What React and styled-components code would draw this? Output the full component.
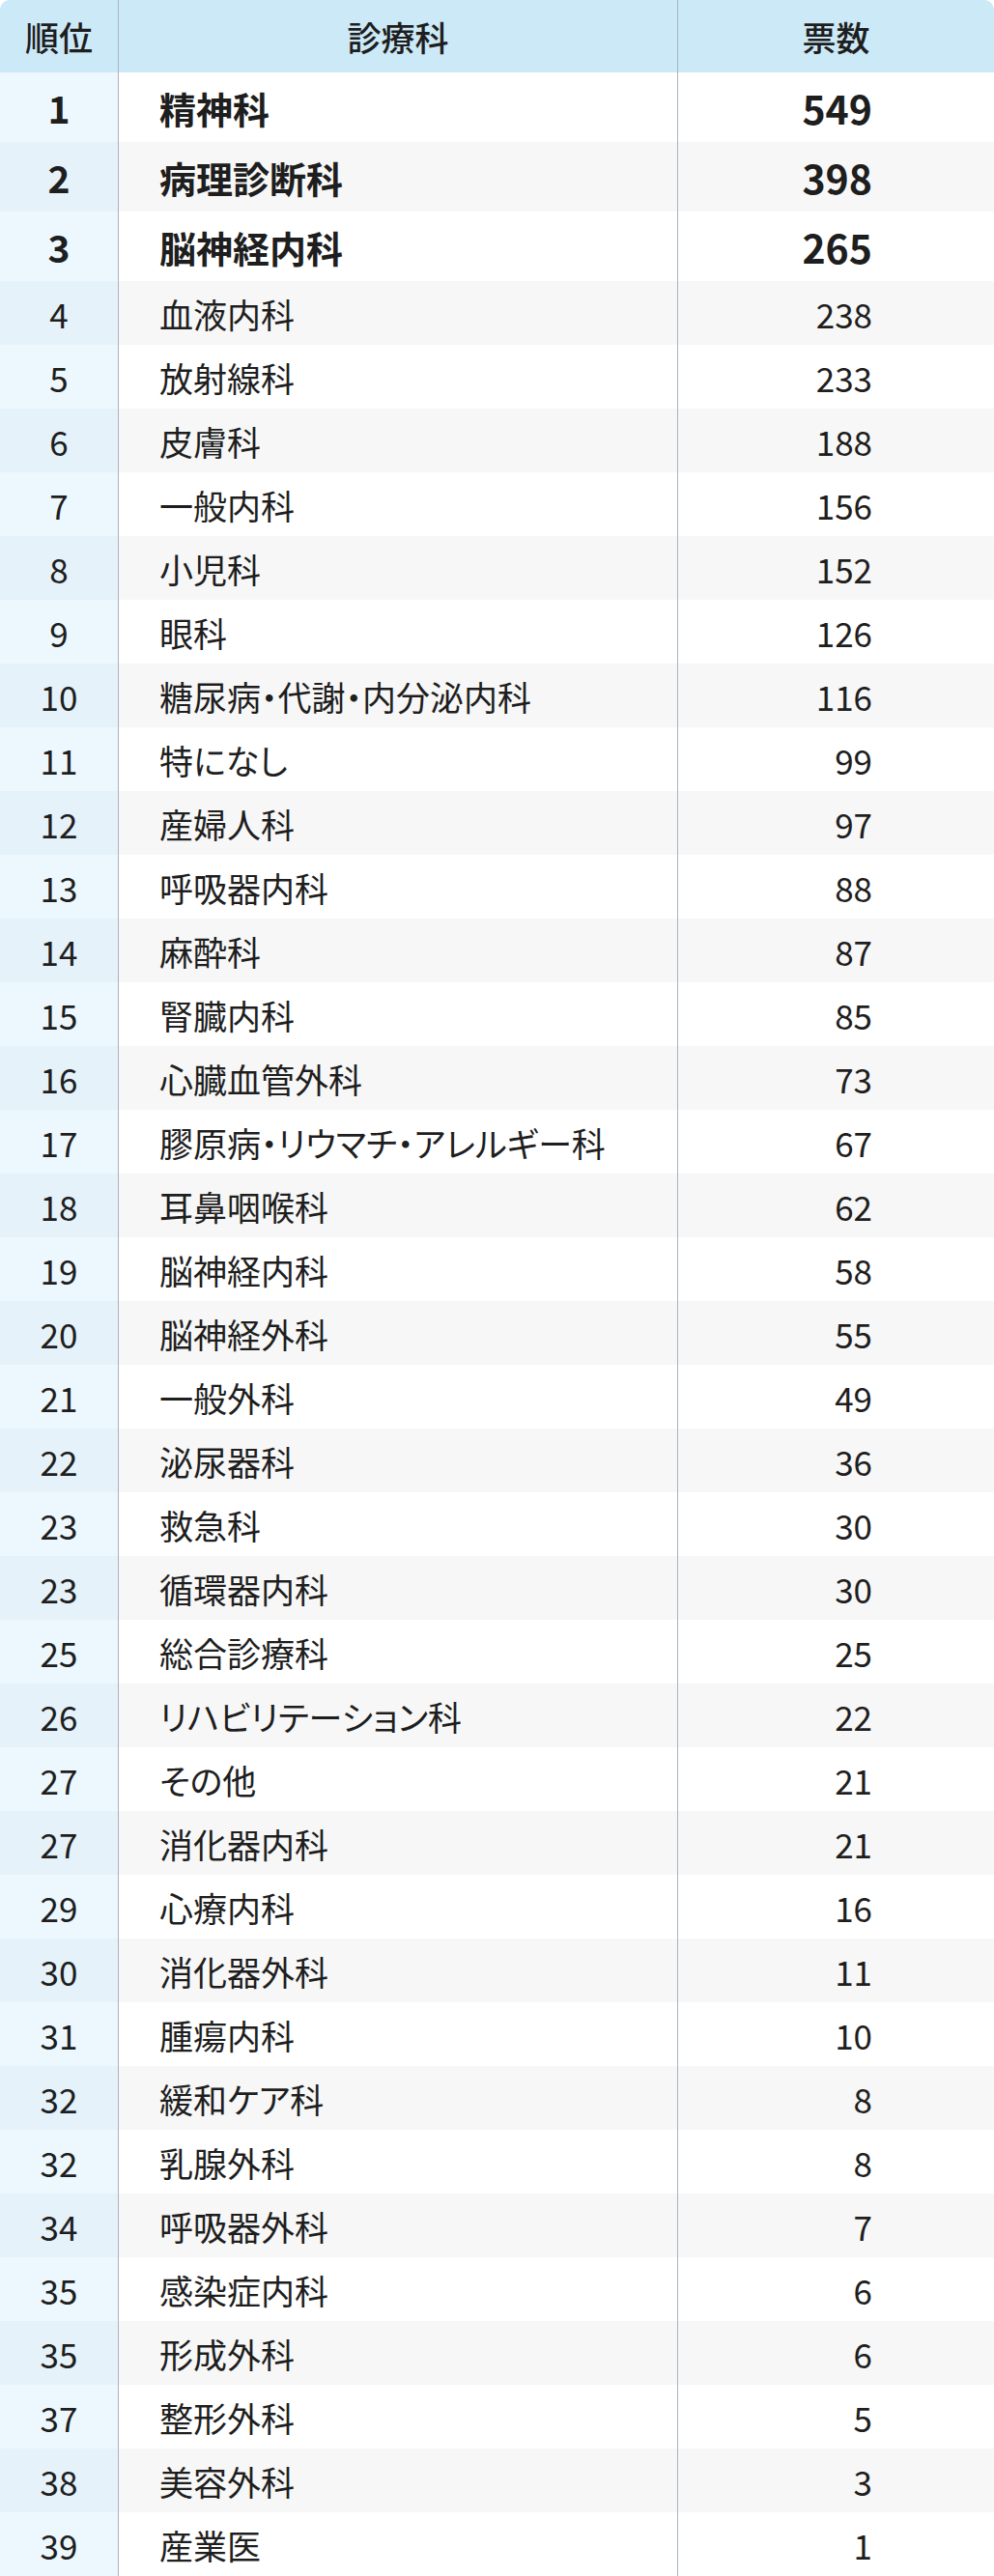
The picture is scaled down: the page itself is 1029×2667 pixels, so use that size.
import styled, { createGlobalStyle } from "styled-components";

const GlobalStyle = createGlobalStyle`
  html, body {
    margin: 0;
    padding: 0;
    background: #ffffff;
  }
  body {
    font-family: "Noto Sans CJK JP", "Noto Sans", sans-serif;
    color: #1e1e1e;
  }
`;

const data = [
  [1, "精神科", 549],
  [2, "病理診断科", 398],
  [3, "脳神経内科", 265],
  [4, "血液内科", 238],
  [5, "放射線科", 233],
  [6, "皮膚科", 188],
  [7, "一般内科", 156],
  [8, "小児科", 152],
  [9, "眼科", 126],
  [10, "糖尿病・代謝・内分泌内科", 116],
  [11, "特になし", 99],
  [12, "産婦人科", 97],
  [13, "呼吸器内科", 88],
  [14, "麻酔科", 87],
  [15, "腎臓内科", 85],
  [16, "心臓血管外科", 73],
  [17, "膠原病・リウマチ・アレルギー科", 67],
  [18, "耳鼻咽喉科", 62],
  [19, "脳神経内科", 58],
  [20, "脳神経外科", 55],
  [21, "一般外科", 49],
  [22, "泌尿器科", 36],
  [23, "救急科", 30],
  [23, "循環器内科", 30],
  [25, "総合診療科", 25],
  [26, "リハビリテーション科", 22],
  [27, "その他", 21],
  [27, "消化器内科", 21],
  [29, "心療内科", 16],
  [30, "消化器外科", 11],
  [31, "腫瘍内科", 10],
  [32, "緩和ケア科", 8],
  [32, "乳腺外科", 8],
  [34, "呼吸器外科", 7],
  [35, "感染症内科", 6],
  [35, "形成外科", 6],
  [37, "整形外科", 5],
  [38, "美容外科", 3],
  [39, "産業医", 1],
];

const Table = styled.div`
  width: 1029px;
  border-radius: 10px 10px 0 0;
  overflow: hidden;
  font-feature-settings: "palt";
`;

const Row = styled.div`
  display: grid;
  grid-template-columns: 123px 579px 327px;
  height: ${(p) => (p.$top ? 72 : 66)}px;
  background: ${(p) => (p.$even ? "#f7f7f7" : "#ffffff")};
`;

const HeaderRow = styled(Row)`
  height: 75px;
  background: #cce9f7;
`;

const HeadCell = styled.div`
  display: flex;
  align-items: center;
  justify-content: center;
  font-size: 35px;
  font-weight: 500;
  border-right: ${(p) => (p.$last ? "none" : "1.5px solid #a9b4bc")};
`;

const RankCell = styled.div`
  display: flex;
  align-items: center;
  justify-content: center;
  background: ${(p) => (p.$even ? "#e5f2fa" : "#edf8fe")};
  border-right: 1.5px solid #a9b4bc;
  font-size: ${(p) => (p.$top ? 39 : 35)}px;
  font-weight: ${(p) => (p.$top ? 700 : 400)};
`;

const NameCell = styled.div`
  display: flex;
  align-items: center;
  padding-left: 42px;
  border-right: 1.5px solid #a9b4bc;
  font-size: ${(p) => (p.$top ? 38 : 35)}px;
  font-weight: ${(p) => (p.$top ? 700 : 400)};
  white-space: nowrap;
`;

const VoteCell = styled.div`
  display: flex;
  align-items: center;
  justify-content: flex-end;
  padding-right: 126px;
  font-size: ${(p) => (p.$top ? 41 : 35)}px;
  font-weight: ${(p) => (p.$top ? 700 : 400)};
`;

const App = () => {
  return (
    <>
      <GlobalStyle />
      <Table>
        <HeaderRow>
          <HeadCell>順位</HeadCell>
          <HeadCell>診療科</HeadCell>
          <HeadCell $last>票数</HeadCell>
        </HeaderRow>
        {data.map(([rank, name, votes], i) => {
          const top = i < 3;
          const even = i % 2 === 1;
          return (
            <Row key={i} $top={top} $even={even}>
              <RankCell $top={top} $even={even}>
                {rank}
              </RankCell>
              <NameCell $top={top}>{name}</NameCell>
              <VoteCell $top={top}>{votes}</VoteCell>
            </Row>
          );
        })}
      </Table>
    </>
  );
};

export default App;
